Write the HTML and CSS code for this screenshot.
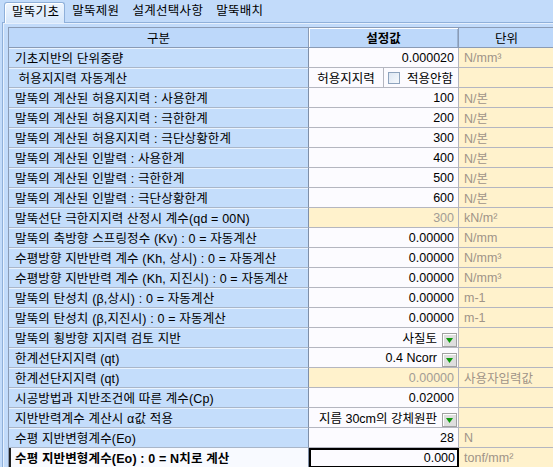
FILE: index.html
```html
<!DOCTYPE html>
<html lang="ko">
<head>
<meta charset="utf-8">
<title>말뚝기초</title>
<link rel="stylesheet" href="styles.css">
</head>
<body>
<div class="tabs">
  <div class="tab active">말뚝기초</div>
  <div class="tab">말뚝제원</div>
  <div class="tab">설계선택사항</div>
  <div class="tab">말뚝배치</div>
</div>
<div class="panel">
  <div class="grid">
    <div class="h h1">구분</div><div class="h h2">설정값</div><div class="h h3">단위</div>

    <div class="lab">기초지반의 단위중량</div><div class="val">0.000020</div><div class="unit">N/mm³</div>

    <div class="lab">&nbsp;허용지지력 자동계산</div>
    <div class="val split"><span class="sp-l">허용지지력</span><span class="sp-r"><span class="chk"></span>적용안함</span></div>
    <div class="unit"></div>

    <div class="lab">말뚝의 계산된 허용지지력 : 사용한계</div><div class="val">100</div><div class="unit">N/본</div>
    <div class="lab">말뚝의 계산된 허용지지력 : 극한한계</div><div class="val">200</div><div class="unit">N/본</div>
    <div class="lab">말뚝의 계산된 허용지지력 : 극단상황한계</div><div class="val">300</div><div class="unit">N/본</div>
    <div class="lab">말뚝의 계산된 인발력 : 사용한계</div><div class="val">400</div><div class="unit">N/본</div>
    <div class="lab">말뚝의 계산된 인발력 : 극한한계</div><div class="val">500</div><div class="unit">N/본</div>
    <div class="lab">말뚝의 계산된 인발력 : 극단상황한계</div><div class="val">600</div><div class="unit">N/본</div>

    <div class="lab">말뚝선단 극한지지력 산정시 계수(qd = 00N)</div><div class="val dis">300</div><div class="unit">kN/m²</div>

    <div class="lab">말뚝의 축방향 스프링정수 (Kv) : 0 = 자동계산</div><div class="val">0.00000</div><div class="unit">N/mm</div>
    <div class="lab">수평방향 지반반력 계수 (Kh, 상시) : 0 = 자동계산</div><div class="val">0.00000</div><div class="unit">N/mm³</div>
    <div class="lab">수평방향 지반반력 계수 (Kh, 지진시) : 0 = 자동계산</div><div class="val">0.00000</div><div class="unit">N/mm³</div>
    <div class="lab">말뚝의 탄성치 (β,상시) : 0 = 자동계산</div><div class="val">0.00000</div><div class="unit">m-1</div>
    <div class="lab">말뚝의 탄성치 (β,지진시) : 0 = 자동계산</div><div class="val">0.00000</div><div class="unit">m-1</div>

    <div class="lab">말뚝의 횡방향 지지력 검토 지반</div>
    <div class="val combo"><span>사질토</span><span class="dd"><svg width="7" height="5" viewBox="0 0 7 5"><polygon points="0,0 7,0 3.5,5" fill="#0e9a0e"/></svg></span></div>
    <div class="unit"></div>

    <div class="lab">한계선단지지력 (qt)</div>
    <div class="val combo"><span>0.4 Ncorr</span><span class="dd"><svg width="7" height="5" viewBox="0 0 7 5"><polygon points="0,0 7,0 3.5,5" fill="#0e9a0e"/></svg></span></div>
    <div class="unit"></div>

    <div class="lab">한계선단지지력 (qt)</div><div class="val dis">0.00000</div><div class="unit">사용자입력값</div>

    <div class="lab">시공방법과 지반조건에 따른 계수(Cp)</div><div class="val">0.02000</div><div class="unit"></div>

    <div class="lab">지반반력계수 계산시 α값 적용</div>
    <div class="val combo"><span>지름 30cm의 강체원판</span><span class="dd"><svg width="7" height="5" viewBox="0 0 7 5"><polygon points="0,0 7,0 3.5,5" fill="#0e9a0e"/></svg></span></div>
    <div class="unit"></div>

    <div class="lab">수평 지반변형계수(Eo)</div><div class="val">28</div><div class="unit">N</div>

    <div class="lab sel">수평 지반변형계수(Eo) : 0 = N치로 계산</div><div class="val cur">0.000</div><div class="unit">tonf/mm²</div>
  </div>
</div>
</body>
</html>
```

FILE: styles.css
```css
html, body {
  margin: 0;
  padding: 0;
}
body {
  width: 553px;
  height: 467px;
  overflow: hidden;
  background: #c2dbfa;
  font-family: "Liberation Sans", "Noto Sans CJK KR", sans-serif;
  font-size: 12.5px;
  color: #000;
}
.tabs {
  display: flex;
  height: 22px;
  padding-left: 4px;
  box-sizing: border-box;
  align-items: flex-end;
}
.tab {
  height: 20px;
  line-height: 19px;
  padding: 0 6px 0 7px;
  box-sizing: border-box;
  white-space: nowrap;
  font-size: 12.5px;
  letter-spacing: 0.3px;
}
.tab.active {
  background: linear-gradient(#eef5fe, #d6e7fb);
  border: 1px solid #8fb0da;
  border-bottom: none;
  border-radius: 3px 3px 0 0;
  box-shadow: inset 1px 1px 0 #ffffff;
  height: 21px;
  padding: 0 5px 0 7px;
  position: relative;
  top: 1px;
}
.panel {
  margin-left: 2px;
  border-left: 1px solid #8fb0da;
  border-top: 1px solid #8fb0da;
  box-shadow: inset 1px 1px 0 #e6f0fd;
  padding: 4px 0 0 5px;
  height: 445px;
  overflow: hidden;
}
.grid {
  display: grid;
  grid-template-columns: 300px 150px 96px;
  grid-auto-rows: 20px;
  border-left: 1px solid #8a9bb5;
  border-top: 1px solid #8a9bb5;
  width: 546px;
}
.grid > div {
  box-sizing: border-box;
  border-bottom: 1px solid #b4b6c0;
  white-space: nowrap;
  overflow: hidden;
  display: flex;
  align-items: center;
}
.h {
  background: #bdd8fa;
  justify-content: center;
  border-right: 1px solid #8a9bb5;
  border-bottom-color: #8a9bb5 !important;
}
.h2 {
  font-weight: bold;
  box-shadow: inset 1px 1px 0 #ffffff, inset -1px 0 0 #9bb3d2;
}
.lab {
  background: #c4ddfb;
  padding-left: 6px;
  letter-spacing: 0.15px;
  border-right: 1px solid #7f8fa8;
  border-bottom-color: #a9b6c9 !important;
  box-shadow: inset 0 1px 0 #eaf3fe;
}
.lab.sel {
  background: #f8faff;
  font-weight: bold;
  box-shadow: inset 2px 0 0 #202020;
}
.val {
  background: #fcfbff;
  justify-content: flex-end;
  padding-right: 4px;
  border-right: 1px solid #b4b6c0;
}
.val.dis {
  background: #fff2cc;
  color: #a39d95;
}
.val.cur {
  border: 2px solid #000 !important;
  padding-right: 2px;
}
.unit {
  background: #fff2cc;
  color: #a09488;
  padding-left: 5px;
}
.split {
  padding-right: 0;
  justify-content: flex-start;
}
.sp-l {
  width: 74px;
  height: 100%;
  border-right: 1px solid #b4b6c0;
  display: flex;
  align-items: center;
  justify-content: center;
  flex: none;
}
.sp-r {
  display: flex;
  align-items: center;
  padding-left: 4px;
  gap: 7px;
}
.chk {
  width: 10px;
  height: 10px;
  border: 1px solid #8ea3bd;
  background: linear-gradient(135deg, #dde6f2, #f6f9fd);
  display: inline-block;
}
.combo {
  padding-right: 1px;
  gap: 5px;
}
.dd {
  align-self: flex-end;
  width: 13px;
  height: 12px;
  background: #dedede;
  border: 1px solid #a2a2a2;
  box-shadow: inset 1px 1px 0 #ffffff;
  display: flex;
  align-items: center;
  justify-content: center;
}
```
